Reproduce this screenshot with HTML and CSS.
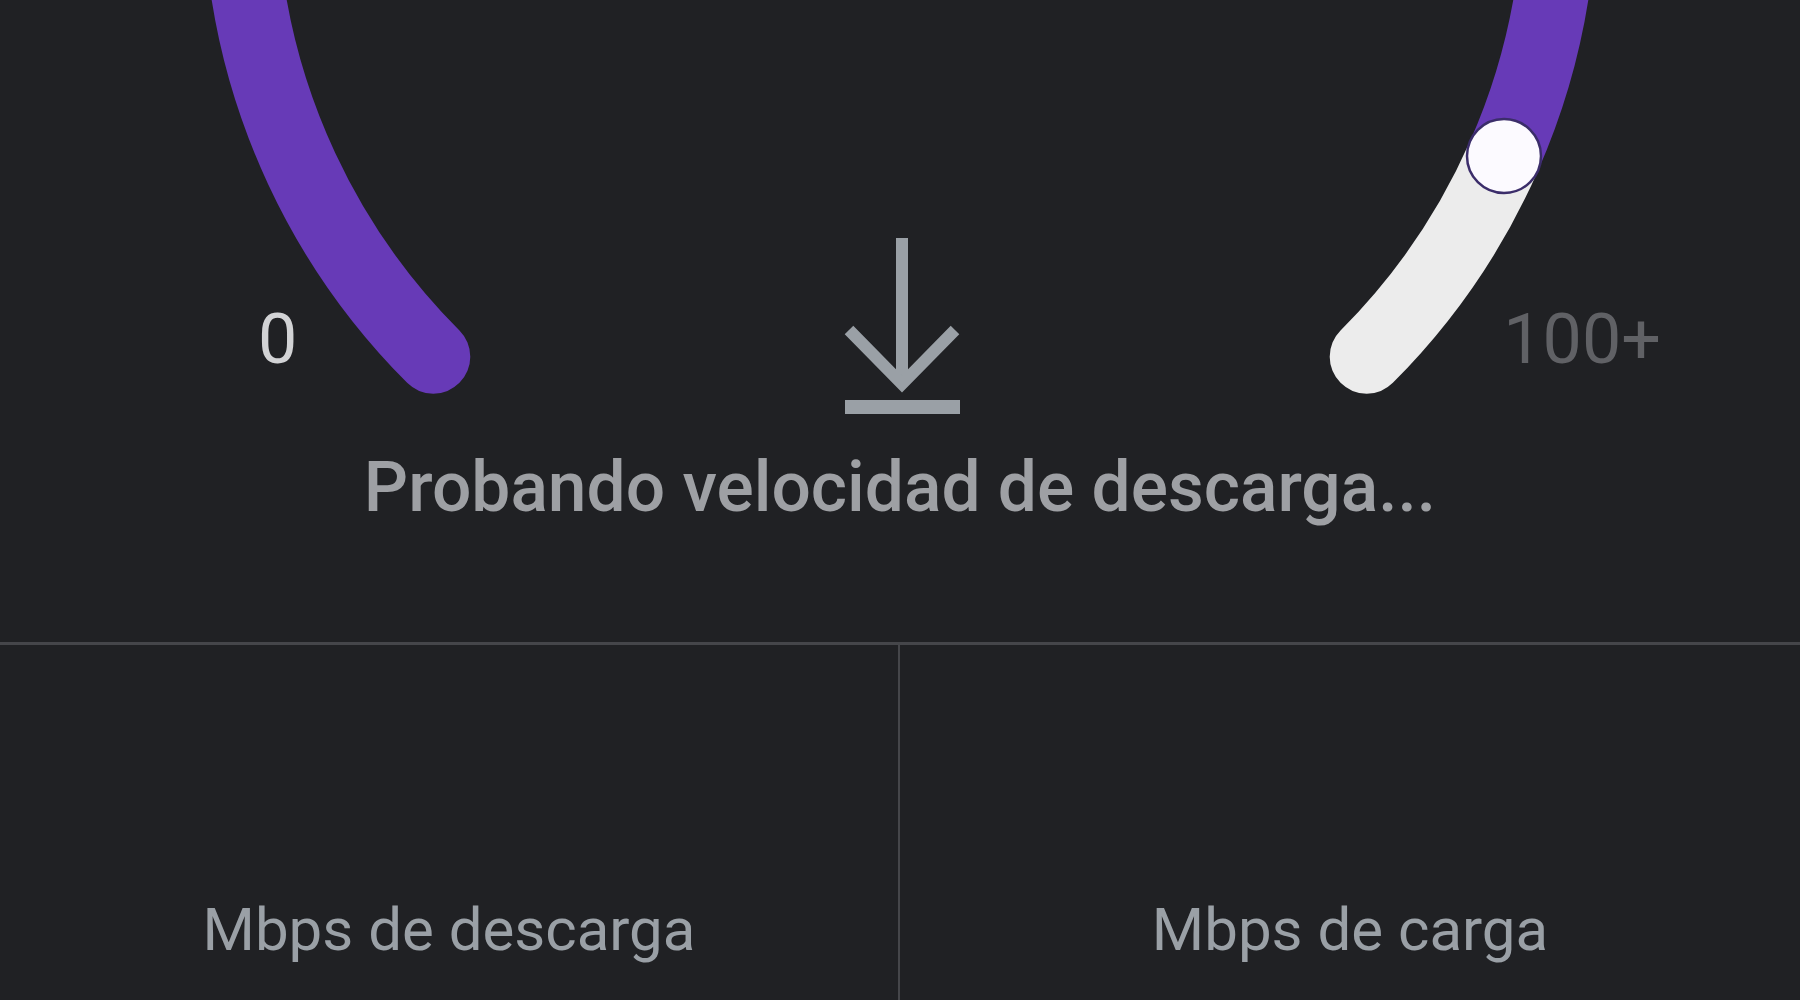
FILE: index.html
```html
<!DOCTYPE html>
<html lang="es">
<head>
  <meta charset="UTF-8">
  <meta name="viewport" content="width=device-width, initial-scale=1.0">
  <title>Prueba de velocidad</title>
  <link rel="stylesheet" href="styles.css">
</head>
<body>
  <div class="speedtest">
    <div class="gauge">
      <!-- Arco del velocímetro -->
      <svg class="gauge-arc" width="1800" height="430" viewBox="0 0 1800 430">
        <path class="arc-track" d="M 1503.9 156.3 A 660 660 0 0 1 1366.7 356.7" />
        <path class="arc-fill" d="M 433.3 356.7 A 660 660 0 1 1 1503.9 156.3" />
        <circle class="arc-knob" cx="1504" cy="156" r="37" />
        <text class="gauge-min" x="258" y="363">0</text>
        <text class="gauge-max" x="1661" y="363" text-anchor="end">100+</text>
      </svg>

      <div class="status">
        <svg class="status-icon" width="120" height="178" viewBox="0 0 120 178">
          <line x1="62" y1="0" x2="62" y2="146" />
          <polyline points="9,92 62,146 115,92" />
          <rect x="5" y="162" width="115" height="14" />
        </svg>
        <p class="status-text">Probando velocidad de descarga...</p>
      </div>
    </div>

    <div class="results">
      <div class="result">
        <span class="result-label">Mbps de descarga</span>
      </div>
      <div class="result">
        <span class="result-label">Mbps de carga</span>
      </div>
    </div>
  </div>
</body>
</html>
```

FILE: styles.css
```css
body { margin: 0; background-color: #202124; color: #9aa0a6; font-family: Roboto, "Noto Sans", sans-serif; }
.speedtest { width: 1800px; height: 1000px; overflow: hidden; }

.gauge { position: relative; height: 642px; }
.gauge-arc { position: absolute; top: 0; left: 0; }
.arc-track { fill: none; stroke: #ececec; stroke-width: 74; stroke-linecap: round; }
.arc-fill { fill: none; stroke: #673ab7; stroke-width: 74; stroke-linecap: round; }
.arc-knob { fill: #fcfaff; stroke: #3b2d6a; stroke-width: 2.5; }
.gauge-min, .gauge-max { font-family: Roboto, sans-serif; font-size: 70px; }
.gauge-min { fill: #d2d3d5; }
.gauge-max { fill: #606165; }

.status { position: relative; display: flex; flex-direction: column; align-items: center; padding-top: 238px; }
.status-icon line, .status-icon polyline { fill: none; stroke: #9aa0a6; stroke-width: 12; stroke-linejoin: miter; }
.status-icon rect { fill: #9aa0a6; }
.status-text { margin: 37px 0 0; font-size: 69.5px; font-weight: 500; line-height: 70px; color: #9ea0a4; }

.results { display: grid; grid-template-columns: 1fr 1fr; border-top: 3px solid #45464a; height: 355px; }
.result { display: flex; justify-content: center; padding-top: 255px; }
.result:first-child { border-right: 2px solid #45464a; }
.result-label { font-size: 60px; line-height: 60px; color: #9aa0a6; }
```
